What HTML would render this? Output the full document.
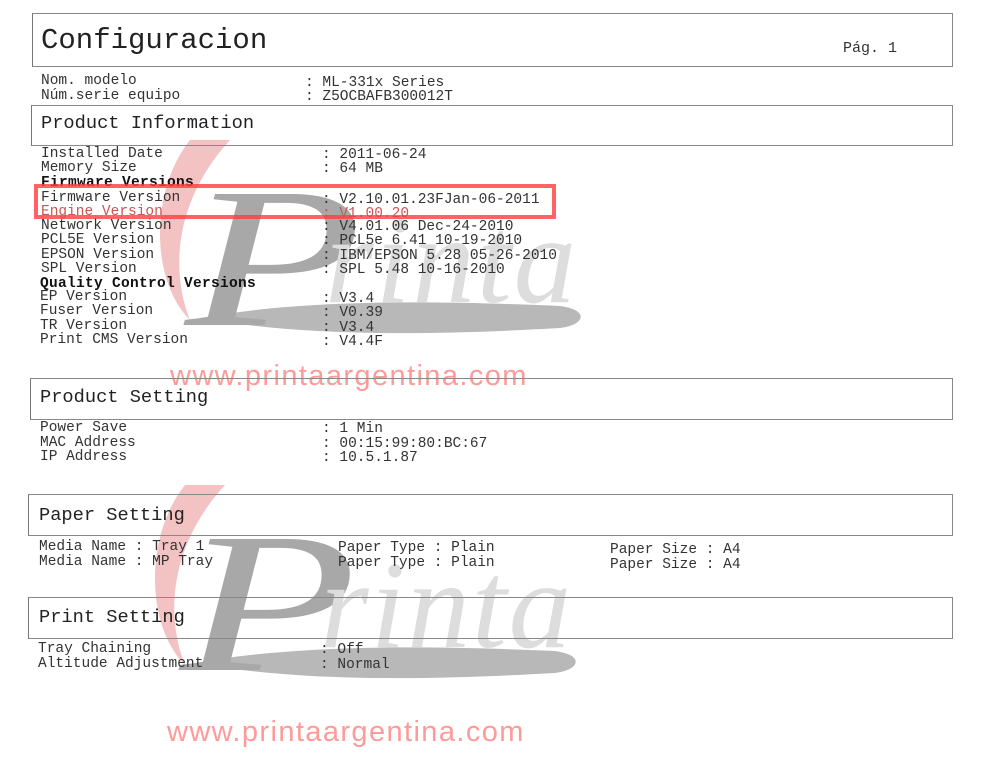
<!DOCTYPE html>
<html><head><meta charset="utf-8"><style>
html,body{margin:0;padding:0;background:#fff;width:1000px;height:769px;overflow:hidden;position:relative}
.t{position:absolute;font-family:"Liberation Mono",monospace;font-size:14.5px;color:#333;white-space:pre;line-height:16px}
.b{font-weight:bold;color:#111;letter-spacing:.3px}
.box{position:absolute;border:1px solid #888;border-left:1.5px solid #777}
.h{position:absolute;font-family:"Liberation Mono",monospace;font-size:18.7px;color:#222;white-space:pre;line-height:22px}
.url{position:absolute;font-family:"Liberation Sans",Arial,sans-serif;font-size:29px;letter-spacing:1.4px;color:#ff9a9a;white-space:pre;line-height:30px}
svg{position:absolute;left:0;top:0}
</style></head><body>

<svg width="1000" height="769">
 <defs>
  <g id="wm">
   <path d="M190 140 C150 190 150 280 190 320 C170 270 175 200 230 140 Z" fill="#f0b3b3" opacity=".8"/>
   <path d="M200 318 C300 300 420 300 560 306 C590 310 585 325 560 328 C420 336 300 336 200 318 Z" fill="#b8b8b8"/>
   <g transform="translate(185,325) scale(1.45,1)"><text x="0" y="0" font-family="Liberation Serif,serif" font-style="italic" font-size="200" fill="#a8a8a8">P</text></g>
   <text x="325" y="302" font-family="Liberation Serif,serif" font-style="italic" font-size="125" fill="#ddd" letter-spacing="2">rinta</text>
  </g>
 </defs>
 <use href="#wm"/>
 <use href="#wm" transform="translate(-5,345)"/>
</svg>

<div class="box" style="left:32px;top:13px;width:919px;height:52px"></div>
<div class="h" style="left:41px;top:24px;font-size:29px;line-height:34px">Configuracion</div>
<div class="t" style="left:843px;top:41px;font-size:15px">Pág. 1</div>

<div class="t" style="left:41px;top:73px">Nom. modelo</div>
<div class="t" style="left:41px;top:88px">Núm.serie equipo</div>
<div class="t" style="left:305px;top:75px">: ML-331x Series</div>
<div class="t" style="left:305px;top:89px">: Z5OCBAFB300012T</div>

<div class="box" style="left:31px;top:105px;width:920px;height:39px"></div>
<div class="h" style="left:41px;top:112px">Product Information</div>

<div class="t" style="left:41px;top:147px;line-height:14.4px">Installed Date
Memory Size</div>
<div class="t b" style="left:41px;top:175px">Firmware Versions</div>
<div class="t" style="left:41px;top:190px">Firmware Version</div>
<div class="t" style="left:41px;top:204px;color:#c55">Engine Version</div>
<div class="t" style="left:41px;top:219px;line-height:14.4px">Network Version
PCL5E Version
EPSON Version
SPL Version</div>
<div class="t b" style="left:40px;top:276px">Quality Control Versions</div>
<div class="t" style="left:40px;top:290px;line-height:14.4px">EP Version
Fuser Version
TR Version
Print CMS Version</div>

<div class="t" style="left:322px;top:148px;line-height:14.4px">: 2011-06-24
: 64 MB</div>
<div class="t" style="left:322px;top:192px">: V2.10.01.23FJan-06-2011</div>
<div class="t" style="left:322px;top:206px;color:#c55">: V1.00.20</div>
<div class="t" style="left:322px;top:220px;line-height:14.4px">: V4.01.06 Dec-24-2010
: PCL5e 6.41 10-19-2010
: IBM/EPSON 5.28 05-26-2010
: SPL 5.48 10-16-2010</div>
<div class="t" style="left:322px;top:292px;line-height:14.4px">: V3.4
: V0.39
: V3.4
: V4.4F</div>

<div style="position:absolute;left:34px;top:184px;width:514px;height:27px;border:4px solid rgba(255,60,60,.8)"></div>

<div class="url" style="left:170px;top:361px">www.printaargentina.com</div>

<div class="box" style="left:30px;top:378px;width:921px;height:40px"></div>
<div class="h" style="left:40px;top:386px">Product Setting</div>
<div class="t" style="left:40px;top:421px;line-height:14.6px">Power Save
MAC Address
IP Address</div>
<div class="t" style="left:322px;top:422px;line-height:14.6px">: 1 Min
: 00:15:99:80:BC:67
: 10.5.1.87</div>

<div class="box" style="left:28px;top:494px;width:923px;height:40px"></div>
<div class="h" style="left:39px;top:504px">Paper Setting</div>
<div class="t" style="left:39px;top:540px;line-height:14.6px">Media Name : Tray 1
Media Name : MP Tray</div>
<div class="t" style="left:338px;top:541px;line-height:14.6px">Paper Type : Plain
Paper Type : Plain</div>
<div class="t" style="left:610px;top:543px;line-height:14.6px">Paper Size : A4
Paper Size : A4</div>

<div class="box" style="left:28px;top:597px;width:923px;height:40px"></div>
<div class="h" style="left:39px;top:606px">Print Setting</div>
<div class="t" style="left:38px;top:642px;line-height:14.6px">Tray Chaining
Altitude Adjustment</div>
<div class="t" style="left:320px;top:643px;line-height:14.6px">: Off
: Normal</div>

<div class="url" style="left:167px;top:717px">www.printaargentina.com</div>
</body></html>
